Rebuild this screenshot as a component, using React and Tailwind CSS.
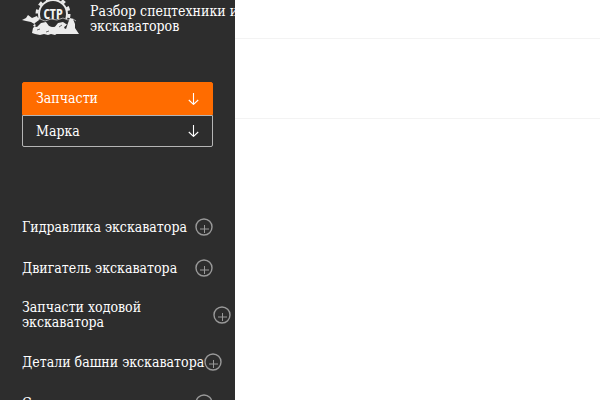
import React from 'react';

const filters = [
  { label: 'Запчасти', active: true },
  { label: 'Марка', active: false },
];

const categories = [
  'Гидравлика экскаватора',
  'Двигатель экскаватора',
  'Запчасти ходовой экскаватора',
  'Детали башни экскаватора',
  'Стрела экскаватора',
];

function Logo() {
  return (
    <svg className="h-9 w-[58px] shrink-0" viewBox="0 0 58 36" fill="none" role="img" aria-label="СТР">
      <circle cx="31" cy="14" r="14" stroke="#e9e9e9" strokeWidth="2" />
      <circle cx="31" cy="14" r="16" stroke="#e9e9e9" strokeWidth="3" strokeDasharray="4 4.4" />
      <path d="M13 22l8-1 9 1 8-2 8 2 8 1" stroke="#2d2d2d" strokeWidth="5" />
      <path d="M13 21l5-2 5 2 6-2 6 1 6-2 5 2 5-1 3 2" stroke="#a8a8a8" strokeWidth="1" />
      <path d="M0 20l4-2 2-3 4 3 5-2 2 4-4 3-2 3 4 1 4-4 5-1 3 4 4 2 4 1 1 4-3 2-4-1-3 1-4-1-4 1-5-1-3-1 1-5 3-3-5-3-5-1z" fill="#ececec" />
      <path d="M31 34l1-6 4-5 5-1 3 2-2 4 2 1 2-6 2-5 3 1 2 5v4l4 6z" fill="#ececec" />
      <path d="M15 30l3-1M24 32l3-1M37 27l3-2" stroke="#6a6a6a" strokeWidth="1" />
      <text x="31" y="19" textAnchor="middle" fill="#f2f2f2" fontSize="14" fontWeight="700" fontFamily="Open Sans Condensed, DejaVu Sans Condensed, sans-serif">СТР</text>
    </svg>
  );
}

function ArrowDown() {
  return (
    <svg className="h-3 w-[11px]" viewBox="0 0 11 12" fill="none" stroke="currentColor" strokeWidth="1.1" aria-hidden="true">
      <path d="M5.5 0v11.4M.8 7l4.7 4.4L10.2 7" />
    </svg>
  );
}

function PlusIcon() {
  return (
    <svg className="size-[18px] shrink-0" viewBox="0 0 18 18" fill="none" stroke="#999" aria-hidden="true">
      <circle cx="9" cy="9" r="8" strokeWidth="1.4" />
      <path d="M9.5 7v8M5 11h9" strokeWidth="1" />
    </svg>
  );
}

export default function App() {
  return (
    <div className="flex h-screen overflow-hidden bg-white font-['DejaVu_Serif_Condensed','DejaVu_Serif',serif] text-[14px] leading-[15px] text-white">
      <aside className="w-[235px] shrink-0 overflow-hidden bg-[#2d2d2d] px-[22px]">
        <a href="#" className="flex h-[82px] items-start gap-[10px]">
          <Logo />
          <span className="shrink-0 pt-1">
            Разбор спецтехники и<br />экскаваторов
          </span>
        </a>

        <div>
          {filters.map(({ label, active }) => (
            <button
              key={label}
              type="button"
              className={`flex w-full items-center justify-between border px-[13px] ${
                active ? 'h-[33px] rounded-t-xs border-[#ff6c00] bg-[#ff6c00]' : 'h-8 rounded-b-xs border-[#b5b5b5]'
              }`}
            >
              {label}
              <ArrowDown />
            </button>
          ))}
        </div>

        <nav className="mt-[71px]">
          <ul className="flex flex-col gap-[23px]">
            {categories.map((name) => (
              <li key={name}>
                <button type="button" className="flex w-full items-center justify-between text-left">
                  <span className="max-w-full shrink-0">{name}</span>
                  <PlusIcon />
                </button>
              </li>
            ))}
          </ul>
        </nav>
      </aside>

      <main className="grow">
        <div className="h-[39px] border-b border-[#f3f3f3]" />
        <div className="h-20 border-b border-[#f3f3f3]" />
      </main>
    </div>
  );
}
